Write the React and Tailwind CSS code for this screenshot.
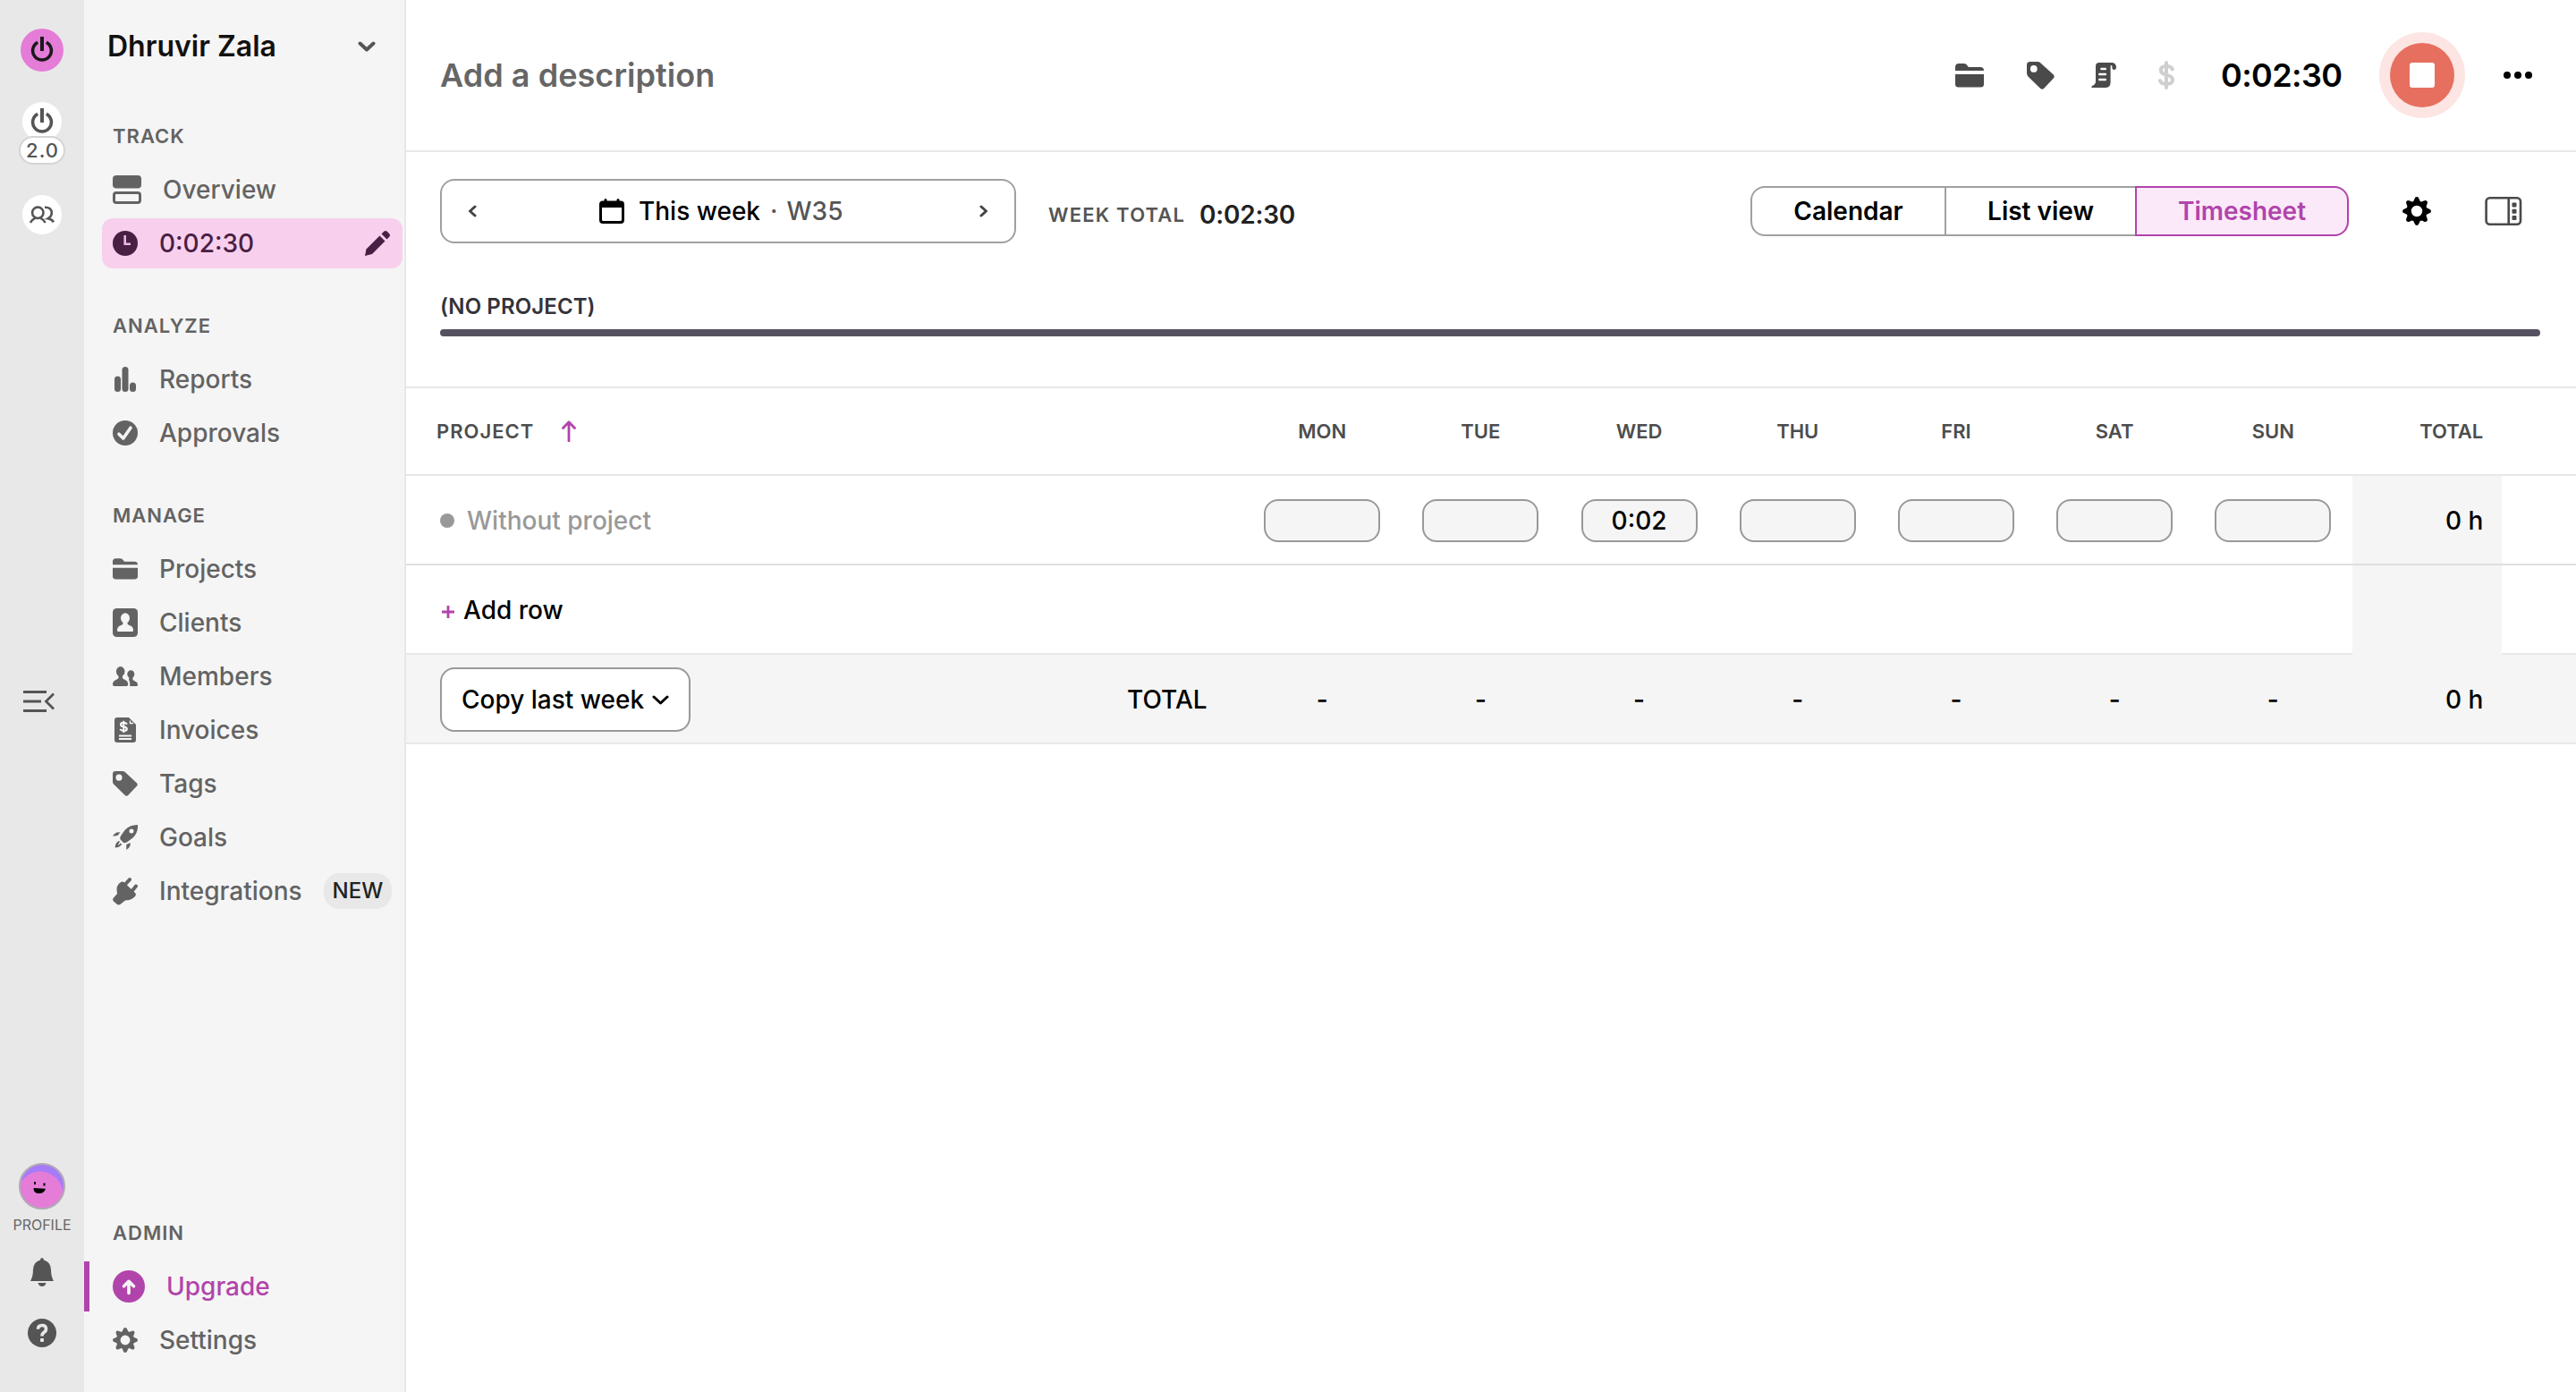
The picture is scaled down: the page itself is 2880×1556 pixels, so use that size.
import React, { useState } from 'react';

const DAYS = ['MON', 'TUE', 'WED', 'THU', 'FRI', 'SAT', 'SUN'];
const TABS = [
  { name: 'Calendar', width: 'w-[219px]' },
  { name: 'List view', width: 'w-[215px]' },
  { name: 'Timesheet', width: 'w-[239px]' },
];
const GRID = 'grid grid-cols-[935.6px_repeat(7,177.2px)_167.4px_1fr]';

function Svg({ w = 28, h = 28, vw = w, vh = h, children, className = '' }) {
  return (
    <svg
      width={w}
      height={h}
      viewBox={`0 0 ${vw} ${vh}`}
      fill="currentColor"
      className={`shrink-0 ${className}`}
    >
      {children}
    </svg>
  );
}

function PowerIcon() {
  return (
    <Svg w={26} h={28}>
      <path
        d="M8.2 6.3A10.4 10.4 0 1 0 17.8 6.3"
        fill="none"
        stroke="currentColor"
        strokeWidth="3.6"
      />
      <rect x="11" y="0" width="4" height="16" />
    </Svg>
  );
}

function PeopleIcon() {
  return (
    <Svg w={28} h={20}>
      <g fill="none" stroke="currentColor" strokeWidth="2.6">
        <circle cx="9.3" cy="7.8" r="6.2" />
        <path d="M1 19Q2.8 15.400 6.500 13.600M12.100 13.600Q15.800 15.400 17.600 19" />
        <path d="M17 1.700Q24.800 1.500 24.800 8Q24.800 12 20.500 14.300Q25 15 27 18.200" />
      </g>
    </Svg>
  );
}

function GearIcon({ size = 28 }) {
  return (
    <Svg w={size} h={size} vw={32} vh={32}>
      <circle cx="16" cy="16" r="8.9" fill="none" stroke="currentColor" strokeWidth="5.4" />
      {[0, 45, 90, 135, 180, 225, 270, 315].map((a) => (
        <path
          key={a}
          d="M11.6 6.5L13.4 2.4Q14 0 16 0T18.6 2.4L20.4 6.5Z"
          transform={`rotate(${a} 16 16)`}
        />
      ))}
    </Svg>
  );
}

function FolderIcon({ w = 28, h = 24 }) {
  return (
    <Svg w={w} h={h} vw={32} vh={27}>
      <path d="M0 8V4Q0 0 4 0H10Q12.500 0 14 3L14.800 4H28Q32 4 32 8Z" />
      <path d="M0 12H32V23Q32 26.500 28.500 26.500H3.500Q0 26.500 0 23Z" />
    </Svg>
  );
}

function TagIcon({ size = 28 }) {
  return (
    <Svg w={size} h={size} vw={31} vh={31}>
      <path
        fillRule="evenodd"
        d="M3.500 0H12Q14 0 15.500 1.400L29.800 14.600Q31.600 16.600 29.800 18.600L19 30Q17.200 31.600 15.300 30L1.400 16.400Q0 15 0 13V3.500Q0 0 3.500 0ZM7.800 4A3.900 3.900 0 1 0 7.800 11.800A3.900 3.900 0 1 0 7.800 4Z"
      />
    </Svg>
  );
}

function OverviewIcon() {
  return (
    <Svg w={32} h={32}>
      <rect width="32" height="14.500" rx="4" />
      <rect x="1.500" y="19.500" width="29" height="11" rx="2.500" fill="none" stroke="currentColor" strokeWidth="3" />
    </Svg>
  );
}

function ClockIcon() {
  return (
    <Svg>
      <circle cx="14" cy="14" r="14" />
      <path d="M13.700 5V14.700H20" fill="none" stroke="#eeb5e2" strokeWidth="2.600" />
    </Svg>
  );
}

function PencilIcon() {
  return (
    <Svg>
      <path d="M16.500 5.500L22.500 11.500L8 26L0 28L1.500 20.500Z" />
      <path d="M18.500 3.500L21 1Q23 -0.800 25 1L27 3Q29 5 27 7L24.500 9.500Z" />
    </Svg>
  );
}

function ReportsIcon() {
  return (
    <Svg>
      <rect x="2" y="10.500" width="7" height="17.500" rx="3.500" />
      <rect x="10.500" y="0" width="7" height="28" rx="3.500" />
      <rect x="19" y="17.500" width="7" height="10.500" rx="3.500" />
    </Svg>
  );
}

function ApprovalsIcon() {
  return (
    <Svg>
      <circle cx="14" cy="14" r="14" />
      <path
        d="M7 15.200L11.800 20L20 8.200"
        fill="none"
        stroke="#f5f5f5"
        strokeWidth="3.600"
        strokeLinecap="round"
        strokeLinejoin="round"
      />
    </Svg>
  );
}

function ClientsIcon() {
  return (
    <Svg h={32}>
      <rect width="28" height="32" rx="4.500" />
      <ellipse cx="14" cy="11" rx="5" ry="5.800" fill="#f5f5f5" />
      <path
        d="M11.500 14H16.500V17.500Q17 18.500 20 19.600Q23 21 23 24.500Q23 26 21.500 26H6.500Q5 26 5 24.500Q5 21 8 19.600Q11 18.500 11.500 17.500Z"
        fill="#f5f5f5"
      />
    </Svg>
  );
}

function MembersIcon() {
  return (
    <Svg h={22}>
      <ellipse cx="8.700" cy="5.600" rx="4.800" ry="5.600" />
      <path d="M6.500 9H11V13Q11.500 14.200 14 15Q17.200 16.400 17.200 20Q17.200 22 15.500 22H1.700Q0 22 0 20Q0 16.400 3.500 15Q6 14.200 6.500 13Z" />
      <ellipse cx="20.300" cy="8.600" rx="4" ry="4.400" />
      <path d="M18.600 11H22.400V14.600Q22.800 15.600 25 16.400Q28 17.400 28 20.500Q28 22 26.500 22H19.200V19Q19.200 16.600 18 15Z" />
    </Svg>
  );
}

function InvoicesIcon() {
  return (
    <Svg>
      <path d="M5 0H18L26 8V25Q26 28 23 28H5Q2 28 2 25V3Q2 0 5 0Z" />
      <path d="M19.500 3.500V6.500H23" fill="none" stroke="#f5f5f5" strokeWidth="1.400" />
      <g fill="none" stroke="#f5f5f5" strokeWidth="2.200">
        <path d="M16 7.600Q14.800 5.900 12.200 5.900Q9 5.900 9 8.100Q9 9.900 12.200 10.300Q15.800 10.700 15.800 12.700Q15.800 14.900 12.400 14.900Q9.500 14.900 8.300 13" />
        <path d="M12.300 3.800V17" strokeWidth="2" />
        <path d="M7 20.500H21M7 24H21" strokeWidth="1.800" />
      </g>
    </Svg>
  );
}

function GoalsIcon() {
  return (
    <Svg>
      <path
        fillRule="evenodd"
        d="M28 0Q28.500 9 22.500 14.500L16.500 19Q13.500 21 11.500 19.500L8.700 16.500Q7.500 14.500 9.300 12L13.500 6Q18.500 0 28 0ZM21 4.500A2.500 2.500 0 1 0 21 9.500A2.500 2.500 0 1 0 21 4.500Z"
      />
      <path d="M8.500 8.200L4.500 8.600Q1.500 10 0 12.800L5.500 12Z" />
      <path d="M19.800 20L19.400 23.500Q18 26.500 15.300 28V22Z" />
      <path d="M7 18Q3 19.500 2.600 25.500Q8 25.500 10.200 21.500L8.600 20.600L6.200 23.200Q6 21 8 19Z" />
    </Svg>
  );
}

function IntegrationsIcon() {
  return (
    <Svg h={31}>
      <path d="M4.500 13Q4.500 8.500 8.500 5.500Q11 3.500 13 5.500L25 17Q27 19 24.500 21.500Q20.500 25.500 14 25.500L9 29.500Q6.500 31.500 4.500 29.500L1 26.500Q-1 24.500 1.500 22L5 18Z" />
      <path
        d="M14.500 7L19 2.200M22 14.500L26 9.500"
        fill="none"
        stroke="currentColor"
        strokeWidth="4"
        strokeLinecap="round"
      />
    </Svg>
  );
}

function UpgradeIcon() {
  return (
    <Svg w={36} h={36}>
      <circle cx="18" cy="18" r="18" />
      <path
        d="M18 25.500V13M12.500 17.800L18 12.300L23.500 17.800"
        fill="none"
        stroke="#f5f5f5"
        strokeWidth="3.600"
        strokeLinecap="round"
        strokeLinejoin="round"
      />
    </Svg>
  );
}

function ScriptIcon() {
  return (
    <Svg w={28} h={28}>
      <path
        fillRule="evenodd"
        d="M9 0H23.500Q28 0.500 28 5.500Q28 8 25.600 8Q23.400 8 23.400 5.800V3.500Q22 2.500 21.600 4V22Q21.600 28 15.500 28H0.500Q0 27 1 26Q5 24.500 5 21V4Q5 0 9 0ZM11.500 5.700A1.300 1.300 0 0 0 11.500 8.300H15.800A1.300 1.300 0 0 0 15.800 5.700ZM9.300 11.700A1.300 1.300 0 0 0 9.300 14.300H15.800A1.300 1.300 0 0 0 15.800 11.700ZM9.300 17.700A1.300 1.300 0 0 0 9.300 20.300H15.800A1.300 1.300 0 0 0 15.800 17.700Z"
      />
    </Svg>
  );
}

function DollarIcon() {
  return (
    <Svg w={18} h={32}>
      <g fill="none" stroke="currentColor" strokeWidth="4" strokeLinecap="round">
        <path d="M15.800 9.500Q14.500 6 9 6Q2.800 6 2.800 10.300Q2.800 14.400 9 15.600Q16 17 16 21.600Q16 26 9 26Q3.200 26 2 22.200" />
        <path d="M9 2V30" />
      </g>
    </Svg>
  );
}

function PanelIcon() {
  return (
    <Svg w={42} h={32}>
      <g fill="none" stroke="currentColor" strokeWidth="2.600">
        <rect x="1.600" y="1.300" width="38.400" height="29.400" rx="4" />
        <path d="M26.700 1V31" />
      </g>
      <rect x="30.500" y="6.500" width="5" height="5" rx="1" />
      <rect x="30.500" y="13.700" width="5" height="5" rx="1" />
      <rect x="30.500" y="20.900" width="5" height="5" rx="1" />
    </Svg>
  );
}

function CalendarIcon() {
  return (
    <Svg w={28} h={28}>
      <path
        fillRule="evenodd"
        d="M4 2.500H5.500V1.500Q5.500 0 7 0T8.500 1.500V2.500H19.500V1.500Q19.500 0 21 0T22.500 1.500V2.500H24Q28 2.500 28 6.500V24Q28 28 24 28H4Q0 28 0 24V6.500Q0 2.500 4 2.500ZM3 10V23.500Q3 25 4.500 25H23.500Q25 25 25 23.500V10Z"
      />
    </Svg>
  );
}

function Chevron({ d, w, h, stroke = 3.6 }) {
  return (
    <Svg w={w} h={h}>
      <path
        d={d}
        fill="none"
        stroke="currentColor"
        strokeWidth={stroke}
        strokeLinecap="round"
        strokeLinejoin="round"
      />
    </Svg>
  );
}

function Rail() {
  return (
    <div className="flex w-[94px] shrink-0 flex-col items-center bg-[#e8e8e8] pt-8 text-[#555]">
      <div className="flex size-12 items-center justify-center rounded-full bg-[#e57cd8] pb-[3px] text-[#1a1a1a]">
        <PowerIcon />
      </div>
      <div className="mt-[34px] flex h-[44px] w-[44px] items-center justify-center rounded-full bg-white pb-[3px]">
        <PowerIcon />
      </div>
      <div className="-mt-[6px] flex h-8 w-[52px] items-center justify-center rounded-full border-2 border-[#d4d4d4] bg-white pl-px text-[22px] font-medium tracking-[1px]">
        2.0
      </div>
      <div className="mt-[34px] flex size-[44px] items-center justify-center rounded-full bg-white">
        <PeopleIcon />
      </div>
      <div className="mt-[510px] -ml-[7px]">
        <Svg w={36} h={24}>
          <path d="M0 1.500H26M0 12H20M0 22.500H26" stroke="currentColor" strokeWidth="2.800" />
          <path d="M34 3.500L25.500 12L34 20.500" fill="none" stroke="currentColor" strokeWidth="2.800" />
        </Svg>
      </div>

      <div className="mt-auto flex flex-col items-center pb-[50px]">
        <Svg w={52} h={52}>
          <clipPath id="face">
            <circle cx="26" cy="26" r="24.500" />
          </clipPath>
          <circle cx="26" cy="26" r="24.500" fill="#a57bf8" />
          <circle cx="24" cy="35" r="25.500" fill="#e57cd8" clipPath="url(#face)" />
          <circle cx="26" cy="26" r="25" fill="none" stroke="#b3a9b5" strokeWidth="2" />
          <rect x="17" y="21" width="2" height="3" fill="#000" />
          <rect x="27.500" y="22.500" width="2" height="3" fill="#000" />
          <path d="M16.500 28L30 28.800Q28.500 34 22.500 34T16.500 28Z" fill="#000" />
        </Svg>
        <span className="mt-[8px] text-[16px] leading-[18px] text-[#666]">PROFILE</span>
        <Svg w={26} h={32} className="mt-[28px]">
          <path d="M13 0Q15 0 15 2.500Q22.500 4.500 23 13Q23 21 26 26H0Q3 21 3 13Q3.500 4.500 11 2.500Q11 0 13 0Z" />
          <path d="M8.500 28H17.500Q16.500 32 13 32T8.500 28Z" />
        </Svg>
        <Svg w={32} h={32} className="mt-[36px]">
          <circle cx="16" cy="16" r="16" />
          <path
            d="M11.500 11.800Q11.500 7.500 16 7.500Q20.500 7.500 20.500 11.500Q20.500 14 18 15.500Q16 16.800 16 19.500"
            fill="none"
            stroke="#e8e8e8"
            strokeWidth="3.600"
          />
          <rect x="14" y="22" width="4" height="4" rx="1" fill="#e8e8e8" />
        </Svg>
      </div>
    </div>
  );
}

function Section({ title, children, className = 'mt-8' }) {
  return (
    <div className={className}>
      <h3 className="flex h-[60px] items-center pl-8 text-[22px] font-semibold tracking-[1px]">
        {title}
      </h3>
      {children}
    </div>
  );
}

function NavItem({ icon, label, badge }) {
  return (
    <a className="ml-8 flex h-[60px] items-center">
      {icon}
      <span className="ml-6 text-[28px] font-medium">{label}</span>
      {badge && (
        <span className="ml-6 flex h-10 items-center rounded-[18px] bg-[#e8e8e8] px-[10px] text-[24px] font-medium text-[#222]">
          {badge}
        </span>
      )}
    </a>
  );
}

function Sidebar() {
  return (
    <div className="flex w-[360px] shrink-0 flex-col border-r-2 border-[#e8e8e8] bg-[#f5f5f5] text-[#636363]">
      <div className="mb-[18px] flex h-[104px] items-center justify-between pl-[26px] pr-8">
        <span className="text-[32px] font-semibold text-[#111]">Dhruvir Zala</span>
        <span className="text-[#555]">
          <Chevron d="M2.500 2.500L10 9.500L17.500 2.500" w={20} h={12} stroke={4} />
        </span>
      </div>

      <Section title="TRACK" className="">
        <NavItem icon={<OverviewIcon />} label="Overview" />
        <a className="my-0.5 ml-5 mr-0.5 flex h-14 items-center rounded-xl bg-[#f8d0ee] pl-3 pr-[14px] text-[#482043]">
          <ClockIcon />
          <span className="ml-6 text-[28px] font-medium">0:02:30</span>
          <span className="ml-auto">
            <PencilIcon />
          </span>
        </a>
      </Section>

      <Section title="ANALYZE">
        <NavItem icon={<ReportsIcon />} label="Reports" />
        <NavItem icon={<ApprovalsIcon />} label="Approvals" />
      </Section>

      <Section title="MANAGE">
        <NavItem icon={<FolderIcon />} label="Projects" />
        <NavItem icon={<ClientsIcon />} label="Clients" />
        <NavItem icon={<MembersIcon />} label="Members" />
        <NavItem icon={<InvoicesIcon />} label="Invoices" />
        <NavItem icon={<TagIcon />} label="Tags" />
        <NavItem icon={<GoalsIcon />} label="Goals" />
        <NavItem icon={<IntegrationsIcon />} label="Integrations" badge="NEW" />
      </Section>

      <Section title="ADMIN" className="mt-auto pb-7">
        <a className="my-0.5 flex h-14 items-center border-l-[6px] border-[#b144ab] pl-[26px] text-[#b144ab]">
          <UpgradeIcon />
          <span className="ml-6 text-[28px] font-medium">Upgrade</span>
        </a>
        <NavItem icon={<GearIcon />} label="Settings" />
      </Section>
    </div>
  );
}

function TimerBar() {
  return (
    <header className="flex h-[170px] items-center border-b-2 border-[#e8e8e8] pl-[38px] pr-[49px] text-[#4a4a4a]">
      <span className="mr-auto text-[36px] font-semibold tracking-[0.05px] text-[#666]">
        Add a description
      </span>
      <FolderIcon w={32} h={27} />
      <span className="ml-12 flex">
        <TagIcon size={31} />
      </span>
      <span className="ml-[41px] flex">
        <ScriptIcon />
      </span>
      <span className="ml-[47px] flex text-[#cfcfcf]">
        <DollarIcon />
      </span>
      <span className="ml-[52px] w-[136px] whitespace-nowrap text-[36px] font-semibold tracking-[-0.6px] text-black">
        0:02:30
      </span>
      <button className="ml-[41px] flex size-24 items-center justify-center rounded-full bg-[#fce5e2]">
        <span className="flex size-[72px] items-center justify-center rounded-full bg-[#e76f5f]">
          <span className="size-7 rounded-[3px] bg-white" />
        </span>
      </button>
      <Svg w={32} h={8} className="ml-[43px] text-black">
        <circle cx="4" cy="4" r="4" />
        <circle cx="16" cy="4" r="4" />
        <circle cx="28" cy="4" r="4" />
      </Svg>
    </header>
  );
}

function Toolbar() {
  const [tab, setTab] = useState('Timesheet');

  return (
    <div className="flex h-[102px] items-end pl-[38px] pr-[60px]">
      <div className="flex h-[72px] w-[644px] items-center rounded-2xl border-2 border-[#a0a0a0] pl-[29px] pr-[29px] text-[#444]">
        <Chevron d="M8 2L2.500 7L8 12" w={10} h={14} stroke={3} />
        <div className="ml-[137px] mr-auto flex items-center text-[28px] font-medium text-[#555]">
          <span className="text-black">
            <CalendarIcon />
          </span>
          <span className="ml-4 text-black">This week</span>
          <span className="ml-[11px] mr-[10px]">·</span>
          <span>W35</span>
        </div>
        <Chevron d="M2 2L7.500 7L2 12" w={10} h={14} stroke={3} />
      </div>
      <div className="ml-9 flex h-[64px] items-center">
        <span className="w-[169px] whitespace-nowrap text-[22px] font-semibold tracking-[1.200px] text-[#555]">
          WEEK TOTAL
        </span>
        <span className="text-[28px] font-semibold tracking-[-0.2px] text-[#222]">0:02:30</span>
      </div>

      <div className="ml-auto flex h-[72px] items-center">
        <div className="flex h-14">
          {TABS.map((t, i) => (
            <button
              key={t.name}
              onClick={() => setTab(t.name)}
              className={`${t.width} border-2 text-[28px] font-semibold
                ${i === 0 ? 'rounded-l-2xl' : '-ml-0.5'}
                ${i === TABS.length - 1 ? 'rounded-r-2xl' : ''}
                ${tab === t.name
                  ? 'relative border-[#b144ab] bg-[#fbe9f9] text-[#b144ab]'
                  : 'border-[#a0a0a0] text-black'}`}
            >
              {t.name}
            </button>
          ))}
        </div>
        <span className="ml-[60px] text-black">
          <GearIcon size={32} />
        </span>
        <span className="ml-[60px] text-[#4a4a4a]">
          <PanelIcon />
        </span>
      </div>
    </div>
  );
}

function Timesheet() {
  return (
    <div className="text-[28px] font-medium text-black">
      <div className={`${GRID} h-[100px] items-center border-y-2 border-[#e8e8e8] text-[22px] font-semibold text-[#4d4d4d]`}>
        <div className="flex items-center pl-[34px] tracking-[1px]">
          PROJECT
          <Svg w={16} h={24} className="ml-[31px] text-[#b144ab]">
            <path
              d="M8 23V2M1.500 8.500L8 1.800L14.500 8.500"
              fill="none"
              stroke="currentColor"
              strokeWidth="2.800"
              strokeLinecap="round"
              strokeLinejoin="round"
            />
          </Svg>
        </div>
        {DAYS.map((d) => (
          <div key={d} className="text-center">
            {d}
          </div>
        ))}
        <div className="pr-[21px] text-right">TOTAL</div>
      </div>

      <div className={`${GRID} h-[100px] border-b-2 border-[#dfdfdf]`}>
        <div className="flex items-center pl-[38px] pt-0.5 text-[#999]">
          <span className="mr-[14px] size-4 rounded-full bg-[#999]" />
          Without project
        </div>
        {DAYS.map((d) => (
          <div key={d} className="flex items-center justify-center pt-0.5">
            <div className="flex h-12 w-[130px] items-center justify-center rounded-2xl border-2 border-[#999] bg-[#f5f5f5]">
              {d === 'WED' && '0:02'}
            </div>
          </div>
        ))}
        <div className="flex items-center justify-end bg-[#f5f5f5] pr-[21px] pt-0.5">0 h</div>
      </div>

      <div className={`${GRID} h-[100px] border-b-2 border-[#e8e8e8]`}>
        <div className="flex items-center pl-[40px] pt-0.5">
          <Svg w={14} h={14} className="mr-[10px] mt-1 text-[#b144ab]">
            <path d="M7 0V14M0 7H14" stroke="currentColor" strokeWidth="2.800" />
          </Svg>
          Add row
        </div>
        <div className="col-start-9 -mb-0.5 bg-[#f5f5f5]" />
      </div>

      <div className={`${GRID} h-[100px] items-center border-b-2 border-[#e8e8e8] bg-[#f5f5f5] pt-0.5`}>
        <div className="flex items-center justify-between pl-[38px] pr-10">
          <button className="flex h-[72px] w-[280px] items-center justify-between rounded-2xl border-2 border-[#999] bg-white pl-[22px] pr-[22px]">
            Copy last week
            <Chevron d="M2 2L9.500 9L17 2" w={19} h={11} stroke={3} />
          </button>
          TOTAL
        </div>
        {DAYS.map((d) => (
          <div key={d} className="text-center">
            -
          </div>
        ))}
        <div className="pr-[21px] text-right">0 h</div>
      </div>
    </div>
  );
}

export default function App() {
  return (
    <div className="flex h-screen overflow-hidden bg-white font-[Inter,sans-serif]">
      <Rail />
      <Sidebar />
      <main className="min-w-0 flex-1">
        <TimerBar />
        <Toolbar />
        <div className="h-[160px] pl-[38px] pr-10 pt-[54px]">
          <div className="flex h-[30px] items-center pt-[3px] text-[24px] font-semibold tracking-[0.1px] text-[#33333a]">
            (NO PROJECT)
          </div>
          <div className="mt-3 h-2 rounded-full bg-[#565160]" />
        </div>
        <Timesheet />
      </main>
    </div>
  );
}
